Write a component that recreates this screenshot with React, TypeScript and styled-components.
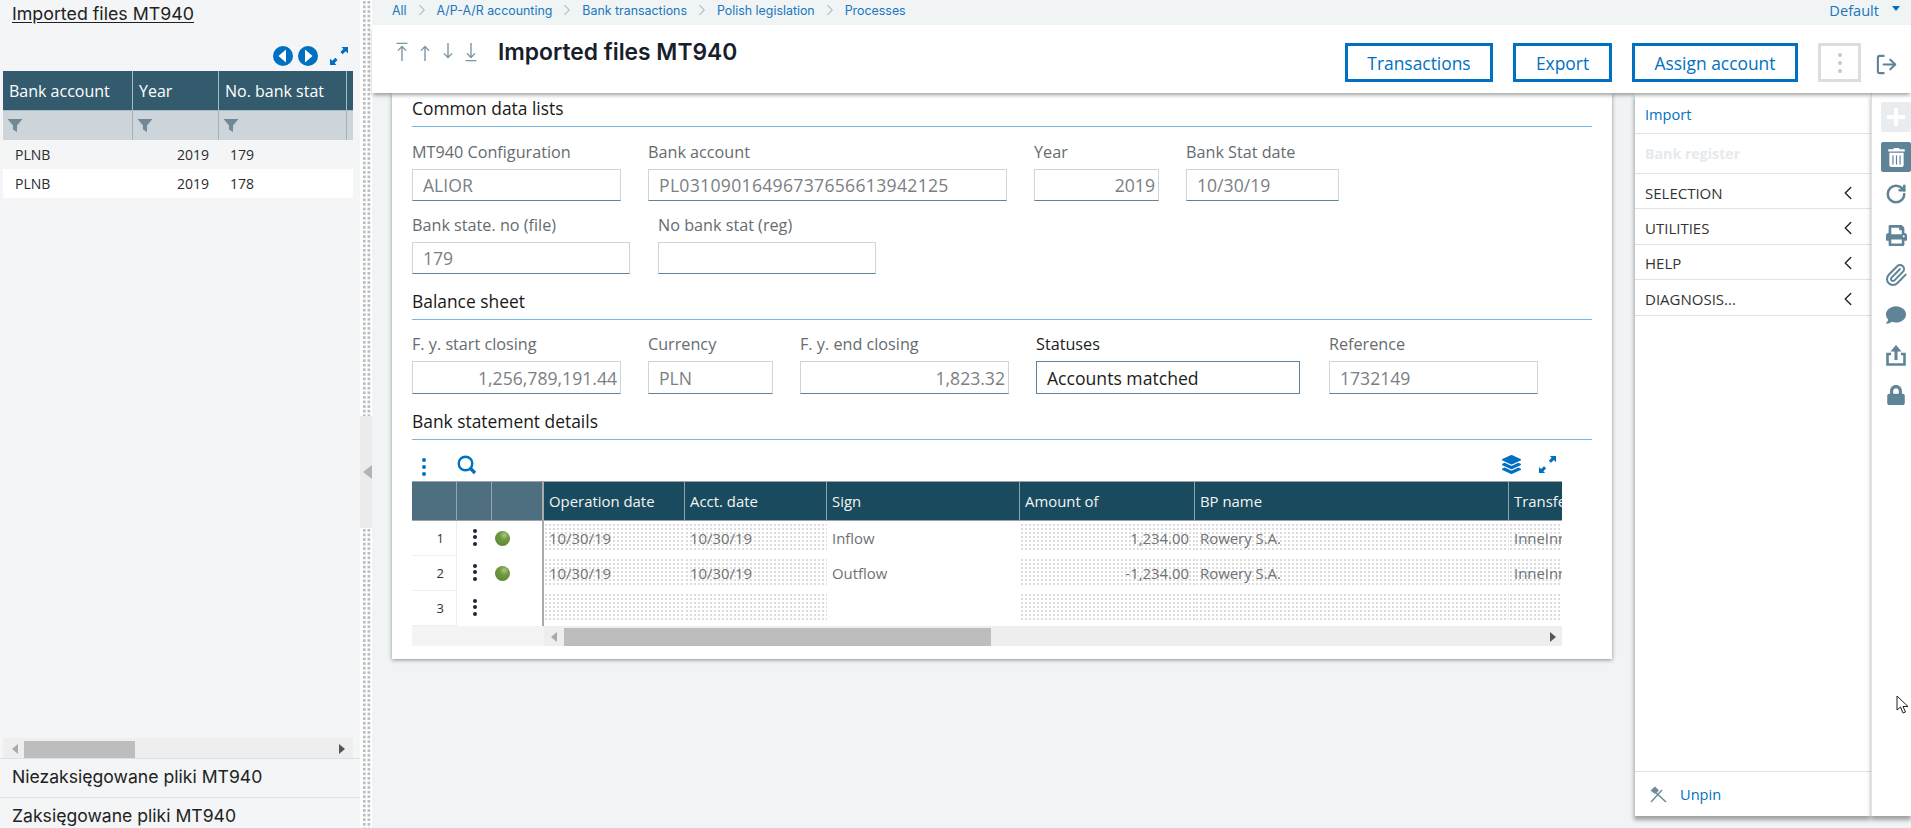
import React from "react";
import styled, { createGlobalStyle } from "styled-components";
import { FaLayerGroup, FaTrashAlt, FaPrint, FaComment, FaLock } from "react-icons/fa";
import { Paperclip, RotateCw, LogOut, ChevronLeft, ChevronRight } from "lucide-react";

const BLUE = "#0071c2";
const SLATE = "#5f8497";
const SANS = `"Open Sans", "Liberation Sans", sans-serif`;
const GROTESK = `Inter, "Liberation Sans", sans-serif`;

const Global = createGlobalStyle`
  html, body { margin: 0; padding: 0; height: 100%; background: #f0f4f5; overflow: hidden; }
  * { box-sizing: border-box; }
`;

const Page = styled.div`
  position: relative;
  display: flex;
  width: 1911px;
  height: 828px;
  overflow: hidden;
  background: #f0f4f5;
  font-family: ${SANS};
`;

/* ------ left panel ------ */
const LeftPanel = styled.aside`
  width: 360px;
  flex: none;
  height: 828px;
  overflow: hidden;
  display: flex;
  flex-direction: column;
  background: #f3f5f6;
  font-family: ${GROTESK};
`;
const LeftTitle = styled.div`
  height: 46px;
  flex: none;
  padding: 2px 0 0 12px;
  font-size: 17.8px;
  line-height: 23px;
  color: #222;
  text-decoration: underline;
  text-underline-offset: 2px;
`;
const NavRow = styled.div`
  height: 25px;
  flex: none;
  display: flex;
  align-items: flex-start;
  padding-left: 273px;
  gap: 5px;
`;
const ExpandSlot = styled.span`
  margin-left: 6px;
  display: flex;
`;
const ListGrid = styled.div`
  height: 687px;
  flex: none;
  display: flex;
  flex-direction: column;
  margin: 0 7px 0 3px;
  font-family: ${SANS};
`;
const ListHeadRow = styled.div`
  display: grid;
  grid-template-columns: 130px 86px 128px 6px;
  height: 39px;
  flex: none;
  background: #335b6d;
`;
const ListHeadCell = styled.div`
  display: flex;
  align-items: center;
  padding-left: 6px;
  color: #fff;
  font-size: 16px;
  border-right: 1px solid #a9bcc6;
  white-space: nowrap;
  &:last-child { border-right: 0; }
`;
const FilterRow = styled.div`
  display: grid;
  grid-template-columns: 130px 86px 128px 6px;
  height: 30px;
  flex: none;
  background: #cdd4da;
  border-top: 1px solid #a9bcc6;
`;
const FilterCell = styled.div`
  display: flex;
  align-items: center;
  padding-left: 4px;
  border-right: 1px solid #a4b2ba;
  &:last-child { border-right: 0; }
`;
const ListRow = styled.div`
  display: grid;
  grid-template-columns: 130px 86px 134px;
  height: 29px;
  flex: none;
  align-items: center;
  background: ${(p) => (p.$alt ? "#ffffff" : "#f3f5f6")};
  font-size: 14px;
  color: #2b2b2b;
`;
const ListCell = styled.div`
  padding-left: ${(p) => p.$pad ?? 0}px;
  padding-right: ${(p) => p.$padR ?? 0}px;
  text-align: ${(p) => (p.$right ? "right" : "left")};
`;
const ListSpacer = styled.div`
  flex: 1;
`;
const LeftLink = styled.div`
  height: 39px;
  flex: none;
  border-top: 1px solid #dfe2e4;
  font-size: 17.6px;
  line-height: 36px;
  padding-left: 12px;
  color: #222;
  white-space: nowrap;
`;

const ScrollBar = styled.div`
  height: ${(p) => p.$h}px;
  display: flex;
  align-items: flex-end;
  background: #eeeeee;
  flex: ${(p) => (p.$grow ? 1 : "none")};
  padding-left: ${(p) => p.$lead}px;
  position: relative;
`;
const ScrollThumb = styled.div`
  width: ${(p) => p.$w}px;
  height: ${(p) => p.$h}px;
  background: #bdbdbd;
`;
const ScrollArrow = styled.svg`
  position: absolute;
  top: 50%;
  margin-top: -4px;
  ${(p) => (p.$side === "left" ? `left: ${p.$at}px;` : `right: ${p.$at}px;`)}
`;

/* ------ splitter ------ */
const Splitter = styled.div`
  width: 12px;
  flex: none;
  display: flex;
  flex-direction: column;
  background: #ffffff;
`;
const DotStrip = styled.div`
  flex: ${(p) => (p.$grow ? 1 : "none")};
  height: ${(p) => (p.$grow ? "auto" : `${p.$h}px`)};
  margin: 0 1px 0 2px;
  background-image: radial-gradient(#bcbfc1 1.5px, transparent 1.8px);
  background-size: 4.6px 4.6px;
`;
const SplitHandle = styled.div`
  height: 112px;
  flex: none;
  background: #ebebeb;
  display: flex;
  align-items: center;
  justify-content: flex-end;
`;
const HandleArrow = styled.div`
  width: 0;
  height: 0;
  border-top: 7px solid transparent;
  border-bottom: 7px solid transparent;
  border-right: 9px solid #b4b4b4;
`;

/* ------ main ------ */
const Main = styled.main`
  flex: 1;
  min-width: 0;
  display: flex;
  flex-direction: column;
`;
const Breadcrumb = styled.nav`
  height: 25px;
  flex: none;
  display: flex;
  align-items: center;
  padding: 0 11px 5px 20px;
  font-family: ${GROTESK};
  font-size: 12.4px;
  color: #1a76bd;
`;
const Crumb = styled.span`
  white-space: nowrap;
`;
const CrumbSep = styled.span`
  display: flex;
  width: ${(p) => p.$w}px;
  justify-content: center;
  color: #bcc3c7;
`;
const ViewName = styled.span`
  margin-left: auto;
  font-family: ${SANS};
  font-size: 14.6px;
  display: flex;
  align-items: center;
  gap: 13px;
  color: #1a76bd;
`;
const Caret = styled.span`
  width: 0;
  height: 0;
  border-left: 4px solid transparent;
  border-right: 4px solid transparent;
  border-top: 5px solid ${BLUE};
  margin-bottom: 3px;
`;
const HeaderBar = styled.header`
  position: relative;
  z-index: 3;
  height: 68px;
  flex: none;
  display: flex;
  background: #fff;
  box-shadow: 0 3px 4px -1px rgba(0, 0, 0, 0.38);
`;
const Steppers = styled.div`
  display: flex;
  align-items: flex-start;
  gap: 9px;
  padding: 17px 0 0 23px;
`;
const PageTitle = styled.h1`
  margin: 0 0 0 20px;
  font-family: ${GROTESK};
  font-weight: 600;
  font-size: 22.8px;
  line-height: 54px;
  color: #17202a;
  white-space: nowrap;
`;
const Actions = styled.div`
  margin-left: auto;
  display: flex;
  align-items: flex-start;
  padding-top: 18px;
  gap: 20px;
`;
const ActionButton = styled.button`
  width: ${(p) => p.$w}px;
  height: 39px;
  background: #fff;
  border: 3px solid ${BLUE};
  color: ${BLUE};
  font-family: ${SANS};
  font-size: 17.4px;
  font-weight: 500;
  padding: 0;
  white-space: nowrap;
`;
const MoreButton = styled.button`
  width: 43px;
  height: 39px;
  background: #fff;
  border: 3px solid #dddddd;
  display: flex;
  flex-direction: column;
  align-items: center;
  justify-content: center;
  gap: 4px;
  padding: 0;
`;
const GreyDot = styled.span`
  width: 4px;
  height: 4px;
  border-radius: 50%;
  background: #c8c8c8;
`;
const ExitSlot = styled.div`
  width: 50px;
  display: flex;
  justify-content: center;
  padding-top: 28px;
  color: ${SLATE};
`;

const Body = styled.div`
  flex: 1;
  display: flex;
  min-height: 0;
`;
const Workspace = styled.div`
  flex: 1;
  padding-left: 20px;
`;
const Card = styled.section`
  width: 1220px;
  height: 566px;
  background: #fff;
  padding: 0 20px 0 20px;
  box-shadow: 0 1px 4px rgba(0, 0, 0, 0.42);
`;
const SectionTitle = styled.h2`
  margin: ${(p) => p.$top ?? 12}px 0 0;
  height: 34px;
  line-height: 30px;
  font-size: 17.4px;
  font-weight: 500;
  color: #191919;
  border-bottom: 1px solid #7ab6e2;
`;
const FieldRow = styled.div`
  display: flex;
  gap: 27px;
  margin-top: ${(p) => p.$top ?? 12}px;
`;
const Field = styled.div`
  width: ${(p) => p.$w}px;
  margin-left: ${(p) => p.$ml ?? 0}px;
  flex: none;
  display: flex;
  flex-direction: column;
`;
const FieldLabel = styled.label`
  height: 24px;
  line-height: 24px;
  margin-bottom: 5px;
  font-size: 16.2px;
  white-space: nowrap;
  color: ${(p) => (p.$active ? "#1d1d1d" : "#666c70")};
`;
const FieldInput = styled.div`
  height: ${(p) => p.$h ?? 32}px;
  display: flex;
  align-items: center;
  justify-content: ${(p) => (p.$right ? "flex-end" : "flex-start")};
  padding: 0 ${(p) => (p.$right ? 3 : 10)}px 0 10px;
  border: 1px solid ${(p) => (p.$active ? "#5f8497" : "#cdd6da")};
  border-bottom: ${(p) => (p.$active ? "1px" : "1.5px")} solid #5f8497;
  font-size: 17.6px;
  letter-spacing: ${(p) => p.$track ?? 0}px;
  white-space: nowrap;
  overflow: hidden;
  color: ${(p) => (p.$active ? "#1d1d1d" : "#7a8084")};
`;

/* ------ data table ------ */
const TableTools = styled.div`
  height: 41px;
  display: flex;
  align-items: flex-start;
  padding: 15px 0 0 10px;
  width: 1150px;
`;
const SearchSlot = styled.span`
  margin-left: 31px;
  display: flex;
`;
const ToolsRight = styled.div`
  margin-left: auto;
  display: flex;
  align-items: center;
  gap: 17px;
  padding-right: 5px;
  color: ${BLUE};
`;
const BlueDots = styled.span`
  display: flex;
  flex-direction: column;
  gap: 3px;
  padding-top: 3px;
`;
const BlueDot = styled.span`
  width: 4px;
  height: 4px;
  border-radius: 50%;
  background: ${(p) => p.$c ?? BLUE};
`;
const TableFrame = styled.div`
  width: 1150px;
  border-top: 1px solid #9aa3a8;
`;
const TablePanes = styled.div`
  display: flex;
`;
const FixedPane = styled.div`
  width: 130px;
  flex: none;
`;
const PaneDivider = styled.div`
  width: 2px;
  flex: none;
  background: #aaaaaa;
`;
const DataPane = styled.div`
  flex: 1;
  min-width: 0;
  overflow: hidden;
`;
const FixedHead = styled.div`
  display: grid;
  grid-template-columns: 45px 35px 50px;
  height: 39px;
  background: #4e6f80;
  border-bottom: 1px solid #9aa3a8;
`;
const FixedHeadCell = styled.div`
  border-right: 1px solid #9aa3a8;
  &:last-child { border-right: 0; }
`;
const FixedRow = styled.div`
  display: grid;
  grid-template-columns: 45px 35px 50px;
  height: 35px;
  align-items: center;
`;
const RowNumber = styled.div`
  height: 100%;
  display: flex;
  align-items: center;
  justify-content: flex-end;
  padding-right: 12px;
  font-size: 13px;
  color: #333;
  border-right: 1px solid #eceeef;
  border-bottom: 1px solid #eceeef;
`;
const RowMenu = styled.div`
  display: flex;
  flex-direction: column;
  align-items: center;
  gap: 2.5px;
  margin-top: -3px;
`;
const StatusCell = styled.div`
  padding-left: 3px;
  display: flex;
`;
const GreenBall = styled.span`
  width: 15px;
  height: 15px;
  border-radius: 50%;
  background: radial-gradient(circle at 62% 28%, #adc886 0, #6f9a3e 32%, #587f33 100%);
`;
const DataHead = styled.div`
  display: grid;
  grid-template-columns: 141px 142px 193px 175px 314px 60px;
  height: 39px;
  background: #1a4a5e;
  border-bottom: 1px solid #9aa3a8;
`;
const DataHeadCell = styled.div`
  display: flex;
  align-items: center;
  padding-left: 5px;
  color: #f2f5f6;
  font-size: 14.9px;
  white-space: nowrap;
  overflow: hidden;
  border-right: 1px solid #8da3ad;
  &:last-child { border-right: 0; }
`;
const DataRow = styled.div`
  display: grid;
  grid-template-columns: 141px 142px 193px 175px 314px 60px;
  height: 35px;
  padding-top: 1px;
`;
const DataCell = styled.div`
  height: 29px;
  margin-top: 1px;
  display: flex;
  align-items: center;
  justify-content: ${(p) => (p.$right ? "flex-end" : "flex-start")};
  padding: 0 ${(p) => (p.$right ? 6 : 0)}px 0 ${(p) => (p.$right ? 0 : 5)}px;
  font-size: 14.9px;
  white-space: nowrap;
  overflow: hidden;
  color: #6d7275;
  ${(p) =>
    p.$dotted
      ? `background-image: radial-gradient(#dcdcdc 0.8px, transparent 1.05px); background-size: 4px 4px;`
      : ""}
`;
const TableScroll = styled.div`
  display: flex;
`;
const FixedScrollFill = styled.div`
  width: 132px;
  flex: none;
  height: 20px;
  background: #f4f4f4;
`;

/* ------ action panel ------ */
const ActionPanel = styled.aside`
  width: 236px;
  height: 723px;
  flex: none;
  display: flex;
  flex-direction: column;
  background: #fff;
  box-shadow: -1px 4px 4px rgba(0, 0, 0, 0.34);
  padding-top: 1px;
`;
const LinkItem = styled.div`
  height: 40px;
  flex: none;
  display: flex;
  align-items: center;
  padding-left: 10px;
  border-bottom: 1px solid #e2e2e2;
  font-size: ${(p) => (p.$muted ? 14.2 : 14.6)}px;
  font-weight: ${(p) => (p.$muted ? 700 : 500)};
  color: ${(p) => (p.$muted ? "#e6eaed" : BLUE)};
`;
const MenuItem = styled.div`
  height: 35.4px;
  flex: none;
  display: flex;
  align-items: center;
  justify-content: space-between;
  padding: 3px 12px 0 10px;
  border-bottom: 1px solid #e2e2e2;
  font-size: 15px;
  color: #333;
`;
const PanelSpacer = styled.div`
  flex: 1;
`;
const UnpinRow = styled.div`
  height: 45px;
  flex: none;
  display: flex;
  align-items: center;
  gap: 13px;
  padding-left: 15px;
  border-top: 1px solid #e2e2e2;
  font-size: 14.6px;
  font-weight: 500;
  color: ${BLUE};
`;
const IconRail = styled.div`
  width: 40px;
  height: 723px;
  flex: none;
  display: flex;
  flex-direction: column;
  align-items: flex-start;
  padding: 9px 0 0 9px;
  border-left: 1px solid #e2e2e2;
  background: #fff;
  box-shadow: 0 4px 4px rgba(0, 0, 0, 0.34);
  color: ${SLATE};
`;
const RailTile = styled.div`
  width: 30px;
  height: 30px;
  flex: none;
  display: flex;
  align-items: center;
  justify-content: center;
  border-radius: 2px;
  background: ${(p) => (p.$disabled ? "#e9edf0" : SLATE)};
  color: #fff;
  margin-bottom: 10px;
`;
const RailIcon = styled.div`
  width: 30px;
  height: 40px;
  flex: none;
  display: flex;
  align-items: center;
  justify-content: center;
  margin-top: ${(p) => p.$top ?? 0}px;
`;
const PointerShape = styled.svg`
  position: absolute;
  left: 1896px;
  top: 695px;
`;

const Stepper = ({ d }: { d: string }) => (
  <svg width="14" height="20" viewBox="0 0 14 22" fill="none" stroke="#7a94a1" strokeWidth="1.5">
    <path d={d} />
  </svg>
);
const Expand = ({ s }: { s: number }) => (
  <svg width={s} height={s} viewBox="0 0 20 20" fill={BLUE}>
    <path d="M12.5 1H19v6.5l-2.3-2.3-3 3L11.4 6l3-3zM7.5 19H1v-6.5l2.3 2.3 3-3L8.6 14l-3 3z" />
  </svg>
);
const Filter = () => (
  <svg width="16" height="15" viewBox="0 0 15 15" fill="#6f8a96">
    <path d="M0 1h15L9.5 7.5V14L5.5 11.5V7.5z" />
  </svg>
);
const NavCircle = ({ dir }: { dir: "l" | "r" }) => (
  <svg width="20" height="20" viewBox="0 0 20 20">
    <circle cx="10" cy="10" r="10" fill={BLUE} />
    <path d={dir === "l" ? "M13 3.5v13L5.5 10z" : "M7 3.5v13L14.5 10z"} fill="#fff" />
  </svg>
);
const Arrow = ({ side, at }: { side: "left" | "right"; at: number }) => (
  <ScrollArrow $side={side} $at={at} width="6" height="10" viewBox="0 0 6 10">
    <path d={side === "left" ? "M6 0v10L0 5z" : "M0 0v10l6-5z"} fill={side === "left" ? "#aaa" : "#555"} />
  </ScrollArrow>
);
const Dots = () => (
  <RowMenu>
    <BlueDot $c="#223" />
    <BlueDot $c="#223" />
    <BlueDot $c="#223" />
  </RowMenu>
);

const crumbs: [string, number][] = [
  ["All", 30],
  ["A/P-A/R accounting", 30],
  ["Bank transactions", 30],
  ["Polish legislation", 30],
  ["Processes", 0],
];

const rows = [
  { date: "10/30/19", sign: "Inflow", amount: "1,234.00", name: "Rowery S.A.", t: "InneInne", ok: true },
  { date: "10/30/19", sign: "Outflow", amount: "-1,234.00", name: "Rowery S.A.", t: "InneInne", ok: true },
  { date: "", sign: "", amount: "", name: "", t: "", ok: false },
];

export default function App() {
  return (
    <Page>
      <Global />
      <LeftPanel>
        <LeftTitle>Imported files MT940</LeftTitle>
        <NavRow>
          <NavCircle dir="l" />
          <NavCircle dir="r" />
          <ExpandSlot>
            <Expand s={20} />
          </ExpandSlot>
        </NavRow>
        <ListGrid>
          <ListHeadRow>
            <ListHeadCell>Bank account</ListHeadCell>
            <ListHeadCell>Year</ListHeadCell>
            <ListHeadCell>No. bank stat</ListHeadCell>
            <ListHeadCell />
          </ListHeadRow>
          <FilterRow>
            <FilterCell><Filter /></FilterCell>
            <FilterCell><Filter /></FilterCell>
            <FilterCell><Filter /></FilterCell>
            <FilterCell />
          </FilterRow>
          <ListRow>
            <ListCell $pad={12}>PLNB</ListCell>
            <ListCell $right $padR={10}>2019</ListCell>
            <ListCell $pad={11}>179</ListCell>
          </ListRow>
          <ListRow $alt>
            <ListCell $pad={12}>PLNB</ListCell>
            <ListCell $right $padR={10}>2019</ListCell>
            <ListCell $pad={11}>178</ListCell>
          </ListRow>
          <ListSpacer />
          <ScrollBar $h={20} $lead={21}>
            <ScrollThumb $w={111} $h={17} />
            <Arrow side="left" at={9} />
            <Arrow side="right" at={8} />
          </ScrollBar>
        </ListGrid>
        <LeftLink>Niezaksięgowane pliki MT940</LeftLink>
        <LeftLink>Zaksięgowane pliki MT940</LeftLink>
      </LeftPanel>

      <Splitter>
        <DotStrip $h={416} />
        <SplitHandle>
          <HandleArrow />
        </SplitHandle>
        <DotStrip $grow />
      </Splitter>

      <Main>
        <Breadcrumb>
          {crumbs.map(([c, w]) => (
            <React.Fragment key={c}>
              <Crumb>{c}</Crumb>
              {w > 0 && (
                <CrumbSep $w={w}>
                  <ChevronRight size={18} strokeWidth={1.6} />
                </CrumbSep>
              )}
            </React.Fragment>
          ))}
          <ViewName>
            Default
            <Caret />
          </ViewName>
        </Breadcrumb>
        <HeaderBar>
          <Steppers>
            <Stepper d="M1 1.5h12M7 21V5M2.5 9.5 7 5l4.5 4.5" />
            <Stepper d="M7 21V5M2.5 9.5 7 5l4.5 4.5" />
            <Stepper d="M7 1v16M2.5 12.5 7 17l4.5-4.5" />
            <Stepper d="M1 20.5h12M7 1v16M2.5 12.5 7 17l4.5-4.5" />
          </Steppers>
          <PageTitle>Imported files MT940</PageTitle>
          <Actions>
            <ActionButton $w={148}>Transactions</ActionButton>
            <ActionButton $w={99}>Export</ActionButton>
            <ActionButton $w={166}>Assign account</ActionButton>
            <MoreButton>
              <GreyDot />
              <GreyDot />
              <GreyDot />
            </MoreButton>
          </Actions>
          <ExitSlot>
            <LogOut size={23} strokeWidth={2.2} />
          </ExitSlot>
        </HeaderBar>

        <Body>
          <Workspace>
            <Card>
              <SectionTitle $top={0}>Common data lists</SectionTitle>
              <FieldRow $top={13}>
                <Field $w={209}>
                  <FieldLabel>MT940 Configuration</FieldLabel>
                  <FieldInput>ALIOR</FieldInput>
                </Field>
                <Field $w={359}>
                  <FieldLabel>Bank account</FieldLabel>
                  <FieldInput $track={0.3}>PL03109016496737656613942125</FieldInput>
                </Field>
                <Field $w={125}>
                  <FieldLabel>Year</FieldLabel>
                  <FieldInput $right>2019</FieldInput>
                </Field>
                <Field $w={153}>
                  <FieldLabel>Bank Stat date</FieldLabel>
                  <FieldInput>10/30/19</FieldInput>
                </Field>
              </FieldRow>
              <FieldRow>
                <Field $w={218}>
                  <FieldLabel>Bank state. no (file)</FieldLabel>
                  <FieldInput>179</FieldInput>
                </Field>
                <Field $w={218} $ml={1}>
                  <FieldLabel>No bank stat (reg)</FieldLabel>
                  <FieldInput />
                </Field>
              </FieldRow>
              <SectionTitle>Balance sheet</SectionTitle>
              <FieldRow>
                <Field $w={209}>
                  <FieldLabel>F. y. start closing</FieldLabel>
                  <FieldInput $h={33} $right>1,256,789,191.44</FieldInput>
                </Field>
                <Field $w={125}>
                  <FieldLabel>Currency</FieldLabel>
                  <FieldInput $h={33}>PLN</FieldInput>
                </Field>
                <Field $w={209}>
                  <FieldLabel>F. y. end closing</FieldLabel>
                  <FieldInput $h={33} $right>1,823.32</FieldInput>
                </Field>
                <Field $w={264}>
                  <FieldLabel $active>Statuses</FieldLabel>
                  <FieldInput $h={33} $active>Accounts matched</FieldInput>
                </Field>
                <Field $w={209} $ml={2}>
                  <FieldLabel>Reference</FieldLabel>
                  <FieldInput $h={33}>1732149</FieldInput>
                </Field>
              </FieldRow>
              <SectionTitle>Bank statement details</SectionTitle>
              <TableTools>
                <BlueDots>
                  <BlueDot />
                  <BlueDot />
                  <BlueDot />
                </BlueDots>
                <SearchSlot>
                  <svg width="20" height="20" viewBox="0 0 20 20" fill="none">
                    <circle cx="8.5" cy="8.5" r="6.8" stroke={BLUE} strokeWidth="2.4" />
                    <path d="M13 13l5 5" stroke={BLUE} strokeWidth="3.4" />
                  </svg>
                </SearchSlot>
                <ToolsRight>
                  <FaLayerGroup size={19} />
                  <Expand s={19} />
                </ToolsRight>
              </TableTools>
              <TableFrame>
                <TablePanes>
                  <FixedPane>
                    <FixedHead>
                      <FixedHeadCell />
                      <FixedHeadCell />
                      <FixedHeadCell />
                    </FixedHead>
                    {rows.map((r, i) => (
                      <FixedRow key={i}>
                        <RowNumber>{i + 1}</RowNumber>
                        <Dots />
                        <StatusCell>{r.ok && <GreenBall />}</StatusCell>
                      </FixedRow>
                    ))}
                  </FixedPane>
                  <PaneDivider />
                  <DataPane>
                    <DataHead>
                      <DataHeadCell>Operation date</DataHeadCell>
                      <DataHeadCell>Acct. date</DataHeadCell>
                      <DataHeadCell>Sign</DataHeadCell>
                      <DataHeadCell>Amount of</DataHeadCell>
                      <DataHeadCell>BP name</DataHeadCell>
                      <DataHeadCell>Transfer</DataHeadCell>
                    </DataHead>
                    {rows.map((r, i) => (
                      <DataRow key={i}>
                        <DataCell $dotted>{r.date}</DataCell>
                        <DataCell $dotted>{r.date}</DataCell>
                        <DataCell>{r.sign}</DataCell>
                        <DataCell $dotted $right>{r.amount}</DataCell>
                        <DataCell $dotted>{r.name}</DataCell>
                        <DataCell $dotted>{r.t}</DataCell>
                      </DataRow>
                    ))}
                  </DataPane>
                </TablePanes>
                <TableScroll>
                  <FixedScrollFill />
                  <ScrollBar $h={20} $lead={20} $grow>
                    <ScrollThumb $w={427} $h={18} />
                    <Arrow side="left" at={7} />
                    <Arrow side="right" at={6} />
                  </ScrollBar>
                </TableScroll>
              </TableFrame>
            </Card>
          </Workspace>

          <ActionPanel>
            <LinkItem>Import</LinkItem>
            <LinkItem $muted>Bank register</LinkItem>
            {["SELECTION", "UTILITIES", "HELP", "DIAGNOSIS..."].map((m) => (
              <MenuItem key={m}>
                {m}
                <ChevronLeft size={22} strokeWidth={1.5} color="#222" />
              </MenuItem>
            ))}
            <PanelSpacer />
            <UnpinRow>
              <svg width="17" height="17" viewBox="0 0 17 17" fill="none" stroke="#6e8b99">
                <path d="M1 16 12 4" strokeWidth="1.4" />
                <path d="M2.5 3.5 16 16" strokeWidth="1.6" />
                <path d="M0.5 4.5 5 0.5l4 4-4 3.5z" fill="#6e8b99" stroke="none" />
              </svg>
              Unpin
            </UnpinRow>
          </ActionPanel>
          <IconRail>
            <RailTile $disabled>
              <svg width="18" height="18" viewBox="0 0 18 18" fill="#fff">
                <path d="M7 0h4v7h7v4h-7v7H7v-7H0V7h7z" />
              </svg>
            </RailTile>
            <RailTile>
              <FaTrashAlt size={19} />
            </RailTile>
            <RailIcon $top={-8}>
              <RotateCw size={22} strokeWidth={2.8} />
            </RailIcon>
            <RailIcon $top={1}>
              <FaPrint size={21} />
            </RailIcon>
            <RailIcon>
              <Paperclip size={24} strokeWidth={2} />
            </RailIcon>
            <RailIcon>
              <FaComment size={20} />
            </RailIcon>
            <RailIcon>
              <svg width="20" height="22" viewBox="0 0 20 22" fill="none" stroke={SLATE}>
                <path d="M5 10H1.5v10.5h17V10H15" strokeWidth="2.6" />
                <path d="M10 16V3" strokeWidth="3" />
                <path d="M4.5 7.5 10 1l5.5 6.5z" fill={SLATE} stroke="none" />
              </svg>
            </RailIcon>
            <RailIcon>
              <FaLock size={20} />
            </RailIcon>
          </IconRail>
        </Body>
      </Main>

      <PointerShape width="14" height="20" viewBox="0 0 14 20" fill="#fff" stroke="#222" strokeWidth="1">
        <path d="M1 1v14l3.5-3 2.5 6 2.5-1-2.5-5.5H12z" />
      </PointerShape>
    </Page>
  );
}
